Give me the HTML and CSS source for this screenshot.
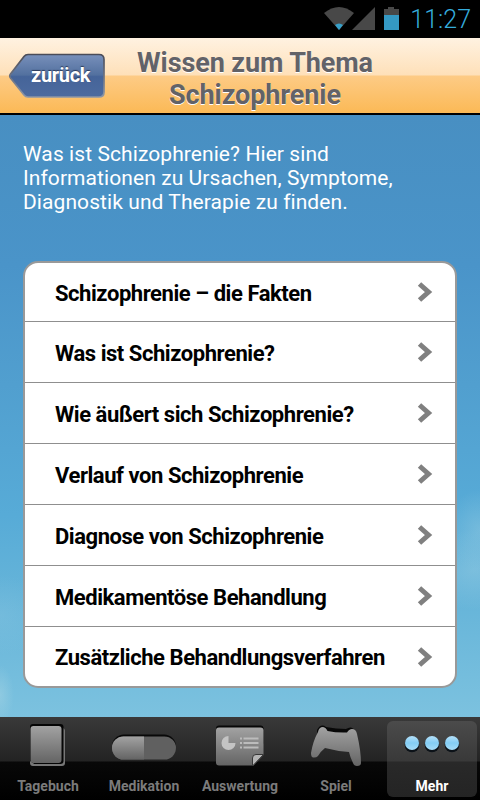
FILE: index.html
```html
<!DOCTYPE html>
<html lang="de">
<head>
  <meta charset="UTF-8" />
  <meta name="viewport" content="width=device-width, initial-scale=1" />
  <title>Wissen zum Thema Schizophrenie</title>
  <link rel="stylesheet" href="styles.css">
</head>
<body>

  <div class="statusbar">
    <svg class="status-icons" width="78" height="26" viewBox="0 0 78 26">
      <path d="M0 7 Q15 -5 30 7 L15 24 Z" fill="#484848"/>
      <path d="M11 19 Q15 16 19 19 L15 24 Z" fill="#37a0c9"/>
      <path d="M51 1 V24 H28 Z" fill="#484848"/>
      <path d="M60 3 H64 V1 H70 V3 H75 V9 H60 Z" fill="#484848"/>
      <path d="M60 9 H75 V24 H60 Z" fill="#3499c4"/>
    </svg>
    <span class="clock">11:27</span>
  </div>

  <header class="header">
    <a class="back" href="#">
      <svg class="back-shape" width="98" height="46" viewBox="0 0 98 46">
        <defs>
          <linearGradient id="backFill" x1="0" y1="0" x2="0" y2="1">
            <stop offset="0" stop-color="#7890bb"/>
            <stop offset="0.48" stop-color="#53719f"/>
            <stop offset="0.52" stop-color="#456499"/>
            <stop offset="1" stop-color="#4d6b9f"/>
          </linearGradient>
          <linearGradient id="backLine" x1="0" y1="0" x2="0" y2="1">
            <stop offset="0" stop-color="#4a4c58"/>
            <stop offset="1" stop-color="#8d96a6"/>
          </linearGradient>
        </defs>
        <path d="M20 1.5 H91 Q96 1.5 96 6.5 V39 Q96 44 91 44 H20 Q17.5 44 16 42 L2.5 25 Q1 23 2.5 21 L16 3.5 Q17.5 1.5 20 1.5 Z" fill="url(#backFill)" stroke="url(#backLine)" stroke-width="1.7"/>
      </svg>
      <span class="back-label">zurück</span>
    </a>
    <h1>Wissen zum Thema<br>Schizophrenie</h1>
  </header>

  <main class="content">
    <p class="intro">Was ist Schizophrenie? Hier sind<br>Informationen zu Ursachen, Symptome,<br>Diagnostik und Therapie zu finden.</p>

    <ul class="topics">
      <li><a href="#"><span>Schizophrenie – die Fakten</span><svg class="chevron" width="16" height="20" viewBox="0 0 16 20"><path d="M2.5 2 L11.5 10 L2.5 18"/></svg></a></li>
      <li><a href="#"><span>Was ist Schizophrenie?</span><svg class="chevron" width="16" height="20" viewBox="0 0 16 20"><path d="M2.5 2 L11.5 10 L2.5 18"/></svg></a></li>
      <li><a href="#"><span>Wie äußert sich Schizophrenie?</span><svg class="chevron" width="16" height="20" viewBox="0 0 16 20"><path d="M2.5 2 L11.5 10 L2.5 18"/></svg></a></li>
      <li><a href="#"><span>Verlauf von Schizophrenie</span><svg class="chevron" width="16" height="20" viewBox="0 0 16 20"><path d="M2.5 2 L11.5 10 L2.5 18"/></svg></a></li>
      <li><a href="#"><span>Diagnose von Schizophrenie</span><svg class="chevron" width="16" height="20" viewBox="0 0 16 20"><path d="M2.5 2 L11.5 10 L2.5 18"/></svg></a></li>
      <li><a href="#"><span>Medikamentöse Behandlung</span><svg class="chevron" width="16" height="20" viewBox="0 0 16 20"><path d="M2.5 2 L11.5 10 L2.5 18"/></svg></a></li>
      <li><a href="#"><span>Zusätzliche Behandlungsverfahren</span><svg class="chevron" width="16" height="20" viewBox="0 0 16 20"><path d="M2.5 2 L11.5 10 L2.5 18"/></svg></a></li>
    </ul>
  </main>

  <nav class="tabbar">
    <a class="tab" href="#">
      <svg width="70" height="48" viewBox="0 0 70 48">
        <defs>
          <linearGradient id="grey" x1="0" y1="0" x2="0" y2="1">
            <stop offset="0" stop-color="#a2a2a2"/>
            <stop offset="1" stop-color="#646464"/>
          </linearGradient>
        </defs>
        <rect x="19" y="7" width="33" height="38" rx="3" fill="#777"/>
        <rect x="17" y="3" width="33.5" height="40" rx="3" fill="#050505"/>
        <path d="M17 40 V42 Q17 45 20 45 H49 V43.5 H22 Z" fill="#777"/>
        <rect x="17.500" y="5" width="31" height="37" rx="3" fill="url(#grey)"/>
      </svg>
      <span>Tagebuch</span>
    </a>
    <a class="tab" href="#">
      <svg width="70" height="48" viewBox="0 0 70 48">
        <rect x="3" y="13.5" width="64" height="24" rx="12" fill="#080808"/>
        <rect x="3" y="15.5" width="64" height="23" rx="11.5" fill="#606060"/>
        <path d="M35 15.5 H14.5 A11.5 11.5 0 0 0 14.5 38.5 H35 Z" fill="url(#grey)"/>
      </svg>
      <span>Medikation</span>
    </a>
    <a class="tab" href="#">
      <svg width="70" height="48" viewBox="0 0 70 48">
        <rect x="11" y="4.5" width="47.5" height="20" rx="3" fill="#080808"/>
        <path d="M14 6.5 H55.500 Q58.500 6.5 58.500 9.5 V34 L48.500 44.500 H14 Q11 44.500 11 41.500 V9.5 Q11 6.5 14 6.5 Z" fill="url(#grey)"/>
        <path d="M47.500 45 V37 Q47.500 33.500 51 33.500 H58.500 Z" fill="#b5b5b5" stroke="#383838" stroke-width="1"/>
        <path d="M23.500 15 A7 7 0 1 0 30.500 22 H23.500 Z" fill="#c4c4c4"/>
        <path d="M35 17.500 H37 M38.500 17.500 H53.500 M35 22 H37 M38.500 22 H53.500 M35 26.500 H37 M38.500 26.500 H53.500" stroke="#bcbcbc" stroke-width="2"/>
      </svg>
      <span>Auswertung</span>
    </a>
    <a class="tab" href="#">
      <svg width="70" height="48" viewBox="0 0 70 48">
        <path d="M16 9 Q20 2 25 6 Q35 8 45 8 Q51 4 54 10 L54 16 H16 Z" fill="#080808"/>
        <path d="M17 11 Q18 6 22 6 Q25 6.500 26.500 10 Q36 12 46 11.500 Q48 8 51 8 Q55 8 56 13 Q60 30 60 42 Q60 45 56 45 Q53 45 52 42 Q49 36 48 31 Q35 30 24 27 Q20 30 17 35 Q15 37 12 36.500 Q10 36 10 32 Q12 20 17 11 Z" fill="url(#grey)"/>
      </svg>
      <span>Spiel</span>
    </a>
    <a class="tab active" href="#">
      <svg width="70" height="48" viewBox="0 0 70 48">
        <defs>
          <linearGradient id="blue" x1="0" y1="0" x2="0" y2="1">
            <stop offset="0" stop-color="#b4e0fa"/>
            <stop offset="0.5" stop-color="#84cdf4"/>
            <stop offset="1" stop-color="#a6dcf8"/>
          </linearGradient>
        </defs>
        <g fill="#0c1218"><circle cx="15" cy="24" r="7.3"/><circle cx="35" cy="24" r="7.3"/><circle cx="55" cy="24" r="7.3"/></g>
        <g fill="url(#blue)"><circle cx="15" cy="22" r="7"/><circle cx="35" cy="22" r="7"/><circle cx="55" cy="22" r="7"/></g>
      </svg>
      <span>Mehr</span>
    </a>
  </nav>

</body>
</html>
```
FILE: styles.css
```css
* {
  box-sizing: border-box;
}

body {
  margin: 0;
  width: 480px;
  height: 800px;
  display: flex;
  flex-direction: column;
  font-family: Roboto, "Liberation Sans", sans-serif;
  background: #000;
  overflow: hidden;
}

a {
  color: inherit;
  text-decoration: none;
}

.statusbar {
  height: 38px;
  flex: none;
  display: flex;
  justify-content: flex-end;
  align-items: center;
  gap: 8px;
  padding: 0 9px 0 0;
}

.clock {
  padding-top: 2px;
  font-size: 25px;
  line-height: 38px;
  color: #35acdc;
  font-weight: 300;
}

/* Title bar */
.header {
  height: 77px;
  flex: none;
  display: flex;
  padding: 15px 0 0 8px;
  border-bottom: 2px solid #000;
  background: linear-gradient(#fff2e1 0, #fee0b9 37px, #fdcb85 38px, #fbb956 100%);
}

.back {
  display: grid;
  width: 98px;
  height: 46px;
}

.back-shape,
.back-label {
  grid-area: 1 / 1;
}

.back-label {
  padding-left: 23px;
  font-size: 20px;
  line-height: 44px;
  font-weight: 700;
  letter-spacing: -0.3px;
  color: #fff;
  text-shadow: 0 -1px 1px #2c3b5a;
}

h1 {
  width: 298px;
  margin: -6px 0 0;
  font-size: 27px;
  line-height: 32px;
  font-weight: 700;
  letter-spacing: -0.1px;
  text-align: center;
  color: #626268;
  text-shadow: 0 1px 0 #fff;
}

/* Sky */
.content {
  height: 602px;
  flex: none;
  padding: 27px 23px 0;
  background:
    radial-gradient(ellipse 35px 40px at 480px 415px, rgba(150, 204, 226, 0.45), transparent),
    radial-gradient(ellipse 60px 40px at 475px 455px, rgba(150, 204, 226, 0.5), transparent),
    radial-gradient(ellipse 50px 40px at 0 500px, rgba(140, 198, 225, 0.3), transparent),
    radial-gradient(ellipse 14px 30px at 0 580px, rgba(165, 212, 228, 0.5), transparent),
    linear-gradient(#488fc2 0, #4a94c9 150px, #519fcf 270px, #57abd7 400px, #65b4d9 480px, #7cc2df 100%);
}

.intro {
  margin: 0;
  height: 119px;
  font-size: 21px;
  line-height: 24px;
  letter-spacing: 0.08px;
  color: #fff;
}

.topics {
  list-style: none;
  margin: 0;
  padding: 0;
  background: #fff;
  border: 2px solid #999;
  border-radius: 15px;
}

.topics li {
  height: 61px;
  border-bottom: 1px solid #8f8f8f;
}

.topics li:first-child,
.topics li:last-child {
  height: 59px;
}

.topics li:last-child {
  border-bottom: 0;
}

.topics a {
  height: 100%;
  display: flex;
  justify-content: space-between;
  align-items: center;
  padding: 0 22px 0 30px;
  font-size: 22px;
  font-weight: 700;
  letter-spacing: -0.45px;
  color: #000;
}

.topics span {
  padding-top: 2px;
}

.chevron {
  fill: none;
  stroke: #808080;
  stroke-width: 5;
}

/* Bottom tabs */
.tabbar {
  height: 83px;
  flex: none;
  display: grid;
  grid-template-columns: repeat(5, 96px);
  background: linear-gradient(#393939 0, #232323 44px, #080808 45px, #000 100%);
}

.tab {
  display: flex;
  flex-direction: column;
  align-items: center;
  margin: 4px 3px 3px;
  border-radius: 6px;
  font-size: 14px;
  line-height: 20px;
  font-weight: 700;
  color: #7b7b7b;
}

.tab span {
  margin-top: 7px;
}

.active {
  color: #fff;
  background: linear-gradient(#4b4b4b 0, #393939 40px, #292929 41px, #242424 100%);
}
```
